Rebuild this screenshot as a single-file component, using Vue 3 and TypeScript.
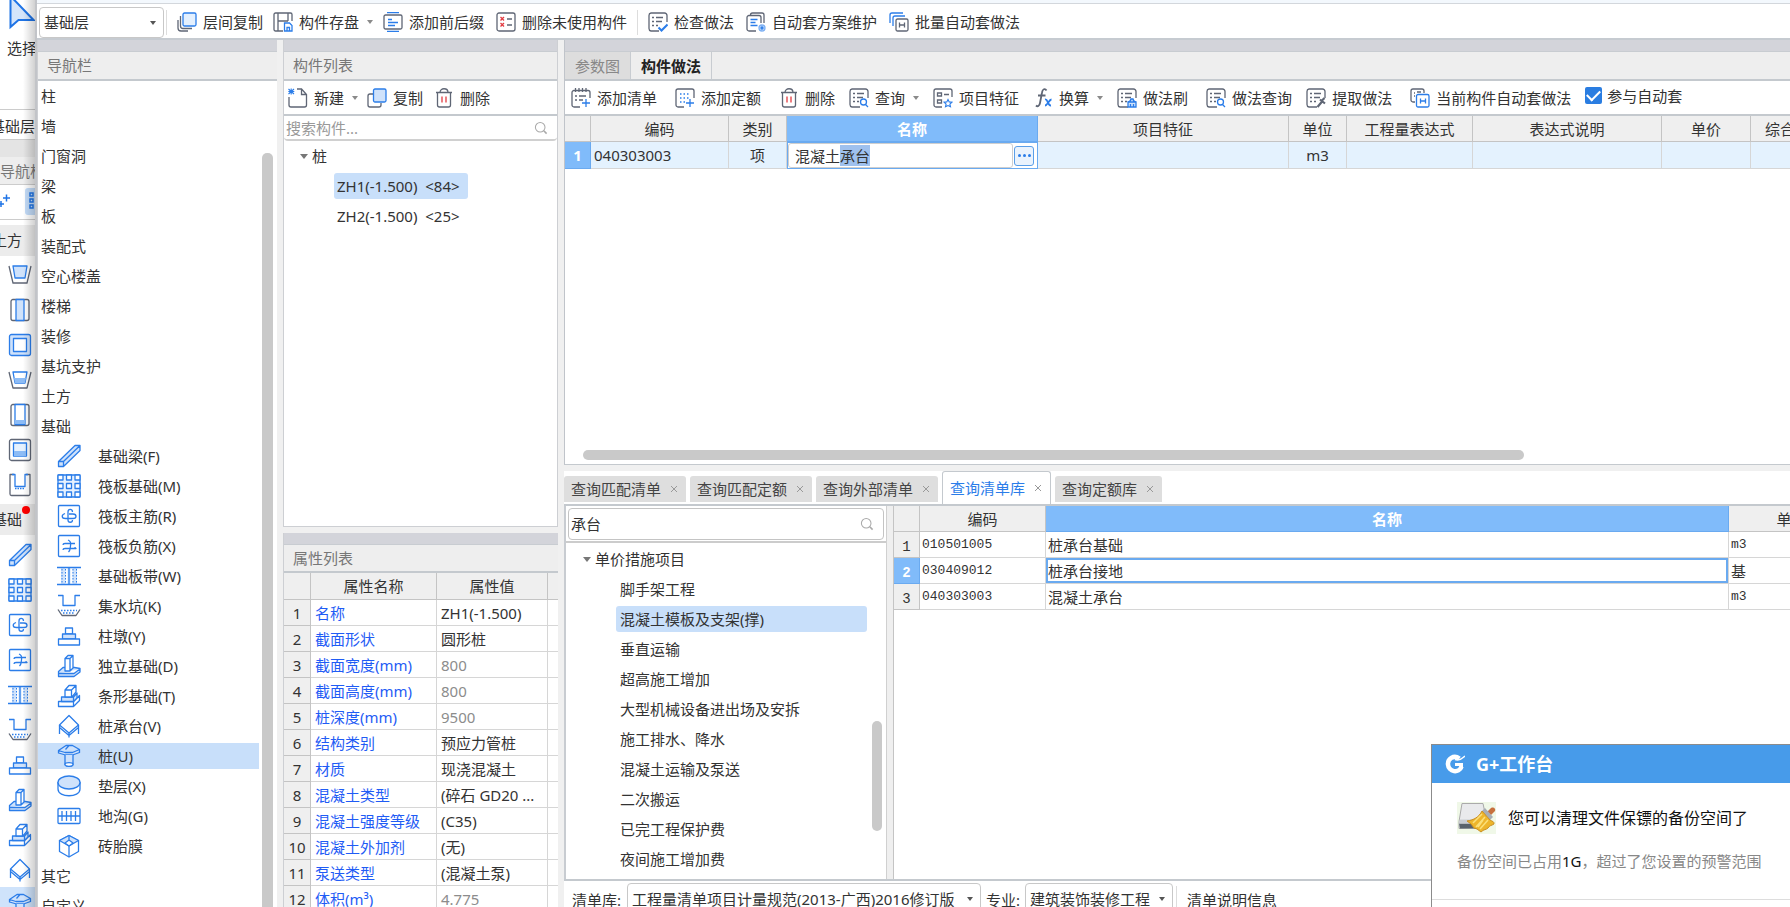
<script setup lang="ts">
import { h, onMounted, ref } from 'vue'
import type { FunctionalComponent } from 'vue'

const G = '#5f6675'
const B = '#2b7de9'
const L = '#cfe2fb'

/* Shape markup of every glyph: toolbar glyphs on a 20 grid, component glyphs on a 24 grid. */
const sheet = `<path d="M11 19H3a2.500 2.500 0 0 1-2-2.500v-13A2.500 2.500 0 0 1 3 1h13.500A2.500 2.500 0 0 1 19 3.500V10" stroke="${G}"/><path d="M4 5.500h2M8 5.500h7M4 9.500h2M8 9.500h6M4 13.500h2M8 13.500h2" stroke="${G}"/>`
const cells = (y: number) => `<path d="M1 ${y}h5v5H1zM9.500 ${y}h5v5h-5zM18 ${y}h5v5h-5z" fill="#fff" stroke="${B}"/>`

const tools: Record<string, string> = {
  layers: `<rect x="6" y="1" width="13" height="13" rx="1.500" fill="#e4f0fe" stroke="${B}"/><path d="M3.500 4v10a2.500 2.500 0 0 0 2.500 2.500h9M1 8v8a3 3 0 0 0 3 3h7" stroke="${G}"/>`,
  save: `<path d="M10 19H2.500A1.500 1.500 0 0 1 1 17.500v-15A1.500 1.500 0 0 1 2.500 1h15A1.500 1.500 0 0 1 19 2.500V9M5 1v18M5 9h10M15 1v8" stroke="${G}"/><path d="M11.500 11h5l2.500 2.500V19h-7.500zM14 19v-3.500h2.500V19" fill="#fff" stroke="${B}"/>`,
  prefix: `<rect x="1" y="3" width="18" height="14" rx="1.500" stroke="${G}"/><path d="M4 .7h12M4 19.300h12M5 7.500h4M5 10.500h10M5 13.500h7" stroke="${B}"/>`,
  unused: `<rect x="1" y="1" width="18" height="18" rx="2" stroke="${G}"/><path d="M4.500 5l3.500 3.500M8 5l-3.500 3.500M4.500 11l3.500 3.500M8 11l-3.500 3.500" stroke="#e23b41"/><path d="M11 7h5M11 13h5" stroke="${G}"/>`,
  check: `${sheet}<path d="M10.500 15.500l3 3 6-6" stroke="${B}" stroke-width="2"/>`,
  scheme: `<path d="M10 19H3a2 2 0 0 1-2-2V5.500A2 2 0 0 1 3 3.500h10a2 2 0 0 1 2 2V11M4.500 3.500V3a2 2 0 0 1 2-2H16a2 2 0 0 1 2 2v8" stroke="${G}"/><path d="M4.500 7.500h7M4.500 10.500h5M4.500 13.500h7" stroke="${B}"/><circle cx="16" cy="16" r="3" fill="${L}" stroke="#7db0f3"/><circle cx="16" cy="16" r="1" stroke="${B}"/>`,
  batch: `<path d="M1 11V3a2 2 0 0 1 2-2h11M4 14V6a2 2 0 0 1 2-2h10" stroke="${B}"/><rect x="7" y="7" width="12" height="12" rx="1.500" fill="#fff" stroke="${G}"/><path d="M10.500 10.500v5M15.500 10.500v5M10.500 13h5" stroke="${G}"/>`,
  create: `<path d="M1 9v8a2 2 0 0 0 2 2h13.500a2 2 0 0 0 2-2V6.500L13.500 1H9M13.500 1v5.500h5" stroke="${G}"/><path d="M.5 1l5.500 5M6 1L.5 6M3.200 .5v6M.3 3.500h6" stroke="${B}" stroke-width="1.100"/>`,
  copy: `<path d="M6 6H3a2 2 0 0 0-2 2v9a2 2 0 0 0 2 2h9a2 2 0 0 0 2-2v-2" stroke="${G}"/><rect x="6.500" y="1" width="12.500" height="13" rx="1.500" fill="${L}" stroke="${B}"/>`,
  trash: `<path d="M2 4.500h16M3.500 4.500V17a2 2 0 0 0 2 2h9a2 2 0 0 0 2-2V4.500M6 4.500c0-5 8-5 8 0" stroke="${G}"/><path d="M8 8.500v6M12 8.500v6" stroke="#e23b41"/>`,
  addList: `<path d="M9 19H3a2 2 0 0 1-2-2V4.500a2 2 0 0 1 2-2h14a2 2 0 0 1 2 2V10M4.500 0v4M8 0v4M11.500 0v4M15 0v4M4 8h2M8 8h7M4 12h2M8 12h4" stroke="${G}"/><path d="M15 11v8M11 15h8" stroke="${B}"/>`,
  addQuota: `<path d="M9 19H3a2 2 0 0 1-2-2V3a2 2 0 0 1 2-2h14a2 2 0 0 1 2 2v7" stroke="${G}"/><path d="M5 6h10M5 10h10M5 14h5" stroke="${B}" stroke-dasharray="1.500 2"/><path d="M15 11v8M11 15h8" stroke="${B}"/>`,
  query: `${sheet}<circle cx="14.500" cy="14" r="3" fill="#fff" stroke="${B}"/><path d="M16.500 16.500L19 19" stroke="${B}"/>`,
  feature: `<path d="M9 19H3a2 2 0 0 1-2-2V3a2 2 0 0 1 2-2h14a2 2 0 0 1 2 2v6M4.500 5h4v3h-4zM4.500 12h4v3h-4zM11 6.500h5" stroke="${G}"/><path d="M15 11.500l1.200 2.400 2.700.3-2 1.900.6 2.700-2.500-1.300-2.500 1.300.6-2.700-2-1.900 2.700-.3z" fill="#fff" stroke="${B}" stroke-width="1.100"/>`,
  formula: `<path d="M13.500 2.500C12 0 9.500 1 9 4.500L7 15c-.5 3-2.500 4-4 2.500M5 7.500h7.500" stroke="${G}" stroke-width="1.800"/><path d="M12 11.500c3-1 2.500 6.500 6 6M18.500 11.500c-2.500 0-4 6-6.500 6" stroke="${B}" stroke-width="1.800"/>`,
  brush: `${sheet}<path d="M11 19v-5h8v5zM11 14c2 0 2.500-.500 3-3h2c.5 2.500 1 3 3 3M13.500 19v-3M16.500 19v-3" fill="${L}" stroke="${B}"/>`,
  extract: `${sheet}<path d="M11.500 19l5-6M14 11.500l5 4M15.500 13l3-3" stroke="${G}" stroke-width="2.200"/>`,
  current: `<path d="M5 14H3a2 2 0 0 1-2-2V3a2 2 0 0 1 2-2h9a2 2 0 0 1 2 2v2M4 5h1M4 8h1M7 4h4" stroke="${G}"/><rect x="6.500" y="6.500" width="12.500" height="12.500" rx="1.500" fill="#fff" stroke="${B}"/><path d="M10.500 10.500v5M15.500 10.500v5M10.500 13h5" stroke="${B}"/>`,
  find: `<circle cx="9" cy="9" r="6" stroke="#a9a9a9"/><path d="M13.500 13.500L17 17" stroke="#a9a9a9" stroke-width="2"/>`,
}

const parts: Record<string, string> = {
  beam: `<path d="M1.500 17.500L18 1.500h5v5L6.500 22.500h-5zM1.500 17.500h5v5M6.500 17.500L23 1.500" fill="${L}" stroke="${B}"/>`,
  raft: `<rect x="1" y="1" width="22" height="22" rx="1" fill="#e6f1fe" stroke="${B}"/>${cells(1)}${cells(9.5)}${cells(18)}`,
  mainBar: `<rect x="1.500" y="1.500" width="21" height="21" rx="1" stroke="${B}"/><path d="M8 9.500c-4 1.500-3.500 5 .5 5H16c4 0 4-4.500 0-4.500h-4" stroke="${B}"/><path d="M15.500 8c0-3.500-4.500-3.500-4.500 0v8c0 3 4.500 3 4.500 0" stroke="${B}"/>`,
  negBar: `<rect x="1.500" y="1.500" width="21" height="21" rx="1" stroke="${B}"/><path d="M6 11c0-1.500 1-1.500 2-1.500h10M6 16c0-1.500 1-1.500 2-1.500h11c-1 0-1-1-1-1.500" stroke="${B}"/><path d="M11 6c3 1 3 3 2.500 6s0 4-2 6" stroke="${B}"/>`,
  strip: `<path d="M4 3.500h16v17H4z" fill="${L}"/><path d="M8.500 3.500h2v17h-2zM13.500 3.500h2v17h-2z" fill="#fff"/><path d="M0 3.500h24M0 20.500h24M12 3.500v17" stroke="${B}"/><path d="M5 5v15M8.500 5v15M16 5v15M19.500 5v15" stroke="${B}" stroke-width="1" stroke-dasharray="1.500 1.500"/>`,
  sump: `<path d="M1 1.500h5v10h12v-10h5" stroke="${B}"/><path d="M4 16.500h16M6 19h12" stroke="${B}" stroke-dasharray="1.500 1.500"/><path d="M1 15.500l4 6h14l4-6" stroke="${G}"/>`,
  pier: `<path d="M8.500 4h7v6h-7z" stroke="${B}"/><path d="M5.500 10h13v5h-13z" fill="${L}" stroke="${B}"/><path d="M1.500 15h21v6h-21z" fill="#fff" stroke="${B}"/>`,
  isolated: `<path d="M1.500 17.500L6 13.500h11.500l5.500 1v3.500l-6 4.500H1.500zM1.500 19.500H17l6-4.500" fill="${L}" stroke="${B}"/><path d="M8 17V4.500l3-3h5V14l-3 3zM8 4.500h5V17M13 4.500l3-3" fill="#fff" stroke="${B}"/>`,
  stripBase: `<path d="M1.500 17.500h15v5h-15zM16.500 17.500l6-6v5l-6 6" fill="#fff" stroke="${B}"/><path d="M4.500 13h12v4.500h-12zM16.500 13l3.500-4v5l-3.500 3.500" fill="${L}" stroke="${B}"/><path d="M8 13V6l4-4.500h7V8l-4 5zM8 6h6.500L19 1.500M14.500 6v7" fill="#fff" stroke="${B}"/>`,
  cap: `<path d="M12 1.500l9.500 9.500-9.500 8L2.500 11z" fill="#fff" stroke="${B}"/><path d="M2.500 11v9M21.500 11v9M12 19v4.500M2.500 13.500l9.500 8 9.500-8" stroke="${B}"/>`,
  pile: `<path d="M1.500 6.500L9 1.500h6.500L22.500 5.500v3L15.500 11H8.500l-7-2zM1.500 6.500L8 8.500h7.500l7-3M8.500 5.500L12 1.500" fill="${L}" stroke="${B}"/><path d="M8 11v9.500c1 2.500 7 2.500 8 0V11" fill="${L}" stroke="${B}"/><ellipse cx="12" cy="20.500" rx="4" ry="1.800" fill="#fff" stroke="${B}"/>`,
  cushion: `<path d="M1 8v7c0 9 22 9 22 0V8" stroke="${B}"/><ellipse cx="12" cy="8.500" rx="11" ry="6.500" fill="${L}" stroke="${B}"/>`,
  trench: `<rect x="1" y="4.500" width="22" height="15" rx="1" stroke="${B}"/><path d="M1 12h22M5 7v10M9.500 7v10M14 7v10M18.500 7v10" stroke="${B}"/>`,
  brick: `<path d="M12 1.500l9.500 5v11L12 23l-9.500-5.500v-11z" fill="#fff" stroke="${B}"/><path d="M12 1.500l9.500 5L12 12 2.500 6.500z" fill="${L}" stroke="${B}"/><path d="M12 12v11M12 1.500V6M8 9l4-3 4 3-4 3z" fill="#fff" stroke="${B}"/>`,
  pitA: `<path d="M1 3l4 17h14l4-17" stroke="${G}"/><path d="M5 3h14l-2 12H7z" fill="${L}" stroke="${B}"/>`,
  slot: `<rect x="3" y="1.500" width="18" height="21" rx="2" stroke="${G}"/><path d="M8 1.500h8v21H8z" fill="${L}" stroke="${B}"/>`,
  square: `<rect x="1.500" y="1.500" width="21" height="21" rx="2" fill="${L}" stroke="${B}"/><rect x="5.500" y="5.500" width="13" height="13" fill="#fff" stroke="${B}"/>`,
  pitB: `<path d="M1 4l4 16h14l4-16" stroke="${G}"/><path d="M5 4h14l-2 11H7z" stroke="${B}"/><path d="M6 10h12l-1 5H7z" fill="#8dbcf6"/>`,
  slotFill: `<rect x="3" y="1.500" width="18" height="21" rx="2" stroke="${G}"/><path d="M7 1.500v20h10v-20z" fill="#fff" stroke="${B}"/><path d="M7 17h10v4H7z" fill="#8dbcf6"/>`,
  squareFill: `<rect x="1.500" y="1.500" width="21" height="21" rx="2" stroke="${G}"/><path d="M5.500 5h13v13h-13z" fill="#e6f1fe" stroke="${B}"/><path d="M6 13h12v5H6z" fill="#8dbcf6"/>`,
  trough: `<path d="M6 1.500H2v19.500a1.500 1.500 0 0 0 1.500 1.500h17a1.500 1.500 0 0 0 1.500-1.500V1.500h-4" stroke="${G}"/><path d="M4 1.500h3v12h10v-12h3" stroke="${B}"/><path d="M7 15.500h10" stroke="${B}" stroke-dasharray="1.500 1"/>`,
}

const Tool: FunctionalComponent<{ name: string }> = (p) =>
  h('svg', { class: 'tool-icon', viewBox: '0 0 20 20', fill: 'none', 'stroke-width': 1.3, 'aria-hidden': 'true', innerHTML: tools[p.name] })
Tool.props = ['name']
const Part: FunctionalComponent<{ name: string }> = (p) =>
  h('svg', { class: 'part-icon', viewBox: '0 0 24 24', fill: 'none', 'stroke-width': 1.3, 'stroke-linejoin': 'round', 'aria-hidden': 'true', innerHTML: parts[p.name] })
Part.props = ['name']

interface Action { icon: string; text: string; menu?: boolean; wide?: boolean }
const fileActions: Action[] = [
  { icon: 'layers', text: '层间复制' },
  { icon: 'save', text: '构件存盘', menu: true },
  { icon: 'prefix', text: '添加前后缀', wide: true },
  { icon: 'unused', text: '删除未使用构件' },
]
const methodActions: Action[] = [
  { icon: 'check', text: '检查做法', wide: true },
  { icon: 'scheme', text: '自动套方案维护', wide: true },
  { icon: 'batch', text: '批量自动套做法' },
]
const listActions: Action[] = [
  { icon: 'create', text: '新建', menu: true },
  { icon: 'copy', text: '复制', wide: true },
  { icon: 'trash', text: '删除' },
]
const rowActions: Action[] = [
  { icon: 'addList', text: '添加清单', wide: true },
  { icon: 'addQuota', text: '添加定额', wide: true },
  { icon: 'trash', text: '删除' },
  { icon: 'query', text: '查询', menu: true },
  { icon: 'feature', text: '项目特征' },
  { icon: 'formula', text: '换算', menu: true },
  { icon: 'brush', text: '做法刷', wide: true },
  { icon: 'query', text: '做法查询' },
  { icon: 'extract', text: '提取做法', wide: true },
  { icon: 'current', text: '当前构件自动套做法' },
]

const categories = ['柱', '墙', '门窗洞', '梁', '板', '装配式', '空心楼盖', '楼梯', '装修', '基坑支护', '土方', '基础']
const foundations = [
  { icon: 'beam', text: '基础梁(F)' },
  { icon: 'raft', text: '筏板基础(M)' },
  { icon: 'mainBar', text: '筏板主筋(R)' },
  { icon: 'negBar', text: '筏板负筋(X)' },
  { icon: 'strip', text: '基础板带(W)' },
  { icon: 'sump', text: '集水坑(K)' },
  { icon: 'pier', text: '柱墩(Y)' },
  { icon: 'isolated', text: '独立基础(D)' },
  { icon: 'stripBase', text: '条形基础(T)' },
  { icon: 'cap', text: '桩承台(V)' },
  { icon: 'pile', text: '桩(U)' },
  { icon: 'cushion', text: '垫层(X)' },
  { icon: 'trench', text: '地沟(G)' },
  { icon: 'brick', text: '砖胎膜' },
]
const lastCategories = ['其它', '自定义']
const earthIcons = ['pitA', 'slot', 'square', 'pitB', 'slotFill', 'squareFill', 'trough']
const railIcons = foundations.slice(0, 11).map((f) => f.icon)
const activePart = ref('pile')

const piles = ['ZH1(-1.500)  <84>', 'ZH2(-1.500)  <25>']
const activePile = ref(0)

const properties: { name: string; value: string; muted?: boolean }[] = [
  { name: '名称', value: 'ZH1(-1.500)' },
  { name: '截面形状', value: '圆形桩' },
  { name: '截面宽度(mm)', value: '800', muted: true },
  { name: '截面高度(mm)', value: '800', muted: true },
  { name: '桩深度(mm)', value: '9500', muted: true },
  { name: '结构类别', value: '预应力管桩' },
  { name: '材质', value: '现浇混凝土' },
  { name: '混凝土类型', value: '(碎石 GD20 ...' },
  { name: '混凝土强度等级', value: '(C35)' },
  { name: '混凝土外加剂', value: '(无)' },
  { name: '泵送类型', value: '(混凝土泵)' },
  { name: '体积(m³)', value: '4.775', muted: true },
]

const queryTabs = ['查询匹配清单', '查询匹配定额', '查询外部清单', '查询清单库', '查询定额库']
const activeTab = ref(3)

const measures = ['脚手架工程', '混凝土模板及支架(撑)', '垂直运输', '超高施工增加', '大型机械设备进出场及安拆', '施工排水、降水', '混凝土运输及泵送', '二次搬运', '已完工程保护费', '夜间施工增加费']
const activeMeasure = ref(1)

const results = [
  { code: '010501005', name: '桩承台基础', unit: 'm3' },
  { code: '030409012', name: '桩承台接地', unit: '基' },
  { code: '040303003', name: '混凝土承台', unit: 'm3' },
]
const activeResult = ref(1)

const itemName = ref('混凝土承台')
const search = ref('承台')
const filter = ref('')
const autoApply = ref(true)
const nameInput = ref<HTMLInputElement | null>(null)

onMounted(() => {
  nameInput.value?.focus()
  nameInput.value?.setSelectionRange(3, 5)
})
</script>

<template>
  <div class="desktop">
    <aside class="rail">
      <div class="rail-select">
        <svg viewBox="0 0 36 32" aria-hidden="true"><path d="M10.500 -4v31l8-7h15z" fill="#d5e5fa" stroke="#1f74e6" stroke-width="2" /></svg>
        <span>选择</span>
      </div>
      <div class="rail-floor">基础层</div>
      <div class="rail-strip"></div>
      <div class="rail-title">导航栏</div>
      <div class="rail-view">
        <svg viewBox="0 0 36 34" aria-hidden="true" fill="none" stroke="#1f74e6" stroke-width="1.500">
          <rect x="25" y="3" width="16" height="27" rx="3" fill="#c3dcf9" stroke="none" />
          <path d="M-2 19h6M1 16v6M3 13h7M6.500 9.500v7" />
          <rect x="30" y="8" width="3" height="3" /><rect x="30" y="14" width="3" height="3" /><rect x="30" y="20" width="3" height="3" />
        </svg>
      </div>
      <div class="rail-group"><span>土方</span></div>
      <div v-for="icon in earthIcons" :key="icon" class="rail-item"><Part :name="icon" /></div>
      <div class="rail-group second"><span>基础</span><i class="dot"></i></div>
      <div v-for="icon in railIcons" :key="icon" class="rail-item" :class="{ active: icon === 'pile' }"><Part :name="icon" /></div>
    </aside>

    <main class="window">
      <header class="topbar">
        <span class="pick floor">
          <select aria-label="楼层"><option>基础层</option></select>
        </span>
        <i class="rule"></i>
        <button v-for="a in fileActions" :key="a.text" type="button" class="action" :class="{ wide: a.wide }">
          <Tool :name="a.icon" /><span>{{ a.text }}</span><i v-if="a.menu" class="caret"></i>
        </button>
        <i class="rule"></i>
        <button v-for="a in methodActions" :key="a.text" type="button" class="action" :class="{ wide: a.wide }">
          <Tool :name="a.icon" /><span>{{ a.text }}</span>
        </button>
      </header>

      <div class="docks">
        <section class="dock nav">
          <div class="grip"></div>
          <h2>导航栏</h2>
          <div class="nav-body">
            <ul>
              <li v-for="c in categories" :key="c"><button type="button" class="cat">{{ c }}</button></li>
              <li v-for="f in foundations" :key="f.icon">
                <button type="button" class="sub" :class="{ active: activePart === f.icon }" @click="activePart = f.icon"><Part :name="f.icon" />{{ f.text }}</button>
              </li>
              <li v-for="c in lastCategories" :key="c"><button type="button" class="cat">{{ c }}</button></li>
            </ul>
            <div class="nav-thumb"></div>
          </div>
        </section>

        <div class="column middle">
          <section class="dock components">
            <div class="grip"></div>
            <h2>构件列表</h2>
            <div class="bar list-bar">
              <button v-for="a in listActions" :key="a.text" type="button" class="action" :class="{ wide: a.wide }">
                <Tool :name="a.icon" /><span>{{ a.text }}</span><i v-if="a.menu" class="caret"></i>
              </button>
            </div>
            <label class="filter"><input v-model="filter" type="text" placeholder="搜索构件..." aria-label="搜索构件" /><Tool name="find" /></label>
            <div class="tree">
              <button type="button" class="branch"><i class="fold"></i>桩</button>
              <button v-for="(p, i) in piles" :key="p" type="button" class="leaf" :class="{ active: activePile === i }" @click="activePile = i"><span>{{ p }}</span></button>
            </div>
          </section>
          <section class="dock properties">
            <div class="grip"></div>
            <h2>属性列表</h2>
            <table class="grid props">
              <thead><tr><th class="num"></th><th class="key">属性名称</th><th class="val">属性值</th><th></th></tr></thead>
              <tbody>
                <tr v-for="(p, i) in properties" :key="p.name">
                  <th class="num" scope="row">{{ i + 1 }}</th><td class="key">{{ p.name }}</td><td class="val" :class="{ muted: p.muted }">{{ p.value }}</td><td></td>
                </tr>
              </tbody>
            </table>
          </section>
        </div>

        <div class="column work">
          <section class="dock upper">
            <div class="grip"></div>
            <div class="view-tabs"><button type="button">参数图</button><button type="button" class="active">构件做法</button></div>
            <div class="bar work-bar">
              <button v-for="a in rowActions" :key="a.text" type="button" class="action" :class="{ wide: a.wide }">
                <Tool :name="a.icon" /><span>{{ a.text }}</span><i v-if="a.menu" class="caret"></i>
              </button>
              <label class="auto"><input v-model="autoApply" type="checkbox" /><span>参与自动套</span></label>
            </div>
            <table class="grid items">
              <thead>
                <tr>
                  <th class="w26"></th><th class="w138">编码</th><th class="w58">类别</th><th class="w251 hot">名称</th><th class="w251">项目特征</th>
                  <th class="w58">单位</th><th class="w126">工程量表达式</th><th class="w189">表达式说明</th><th class="w89">单价</th><th class="w89">综合单价</th>
                </tr>
              </thead>
              <tbody>
                <tr>
                  <th class="hot" scope="row">1</th><td>040303003</td><td class="mid">项</td>
                  <td class="editing">
                    <div class="editor"><input ref="nameInput" v-model="itemName" type="text" aria-label="名称" /><button type="button" aria-label="更多"><i></i><i></i><i></i></button></div>
                  </td>
                  <td></td><td class="mid">m3</td><td></td><td></td><td></td><td></td>
                </tr>
              </tbody>
            </table>
            <div class="blank"></div>
            <div class="track"><div class="thumb"></div></div>
          </section>

          <section class="lower">
            <div class="query-tabs">
              <button v-for="(t, i) in queryTabs" :key="t" type="button" :class="{ active: activeTab === i }" @click="activeTab = i">
                {{ t }}<svg viewBox="0 0 8 8" aria-hidden="true"><path d="M1 1l6 6M7 1L1 7" stroke="#999" stroke-width="1" /></svg>
              </button>
            </div>
            <div class="query-body">
              <div class="library">
                <div class="library-search"><label><input v-model="search" type="text" aria-label="搜索清单" /><Tool name="find" /></label></div>
                <div class="library-tree">
                  <div class="nodes">
                    <button type="button" class="branch"><i class="fold"></i>单价措施项目</button>
                    <button v-for="(m, i) in measures" :key="m" type="button" class="measure" :class="{ active: activeMeasure === i }" @click="activeMeasure = i">{{ m }}</button>
                  </div>
                  <div class="library-thumb"></div>
                </div>
              </div>
              <div class="results">
                <table class="grid found">
                  <thead><tr><th class="w26"></th><th class="w126">编码</th><th class="w683 hot">名称</th><th class="w126">单位</th></tr></thead>
                  <tbody>
                    <tr v-for="(r, i) in results" :key="r.code" :class="{ current: activeResult === i }" @click="activeResult = i">
                      <th scope="row">{{ i + 1 }}</th><td class="mono">{{ r.code }}</td><td class="name">{{ r.name }}</td><td :class="{ mono: r.unit === 'm3' }">{{ r.unit }}</td>
                    </tr>
                  </tbody>
                </table>
              </div>
            </div>
            <footer class="query-foot">
              <label for="library">清单库:</label>
              <span class="pick lib"><select id="library"><option>工程量清单项目计量规范(2013-广西)2016修订版</option></select></span>
              <label for="trade">专业:</label>
              <span class="pick trade"><select id="trade"><option>建筑装饰装修工程</option></select></span>
              <i class="rule"></i>
              <button type="button">清单说明信息</button>
            </footer>
          </section>
        </div>
      </div>
    </main>

    <aside class="toast">
      <h3>
        <svg viewBox="0 0 20 20" aria-hidden="true" fill="none" stroke="#fff"><path d="M14.500 4.500C8.500.5 2.500 5 3 10.500c.5 7.500 11 9.500 13.500 2" stroke-width="4.500" /><path d="M10 10.500h6.500v4" stroke-width="3" /><path d="M10 5.500c3 1 7-.5 10-3.500" stroke-width="1.500" /></svg>
        G+工作台
      </h3>
      <div class="toast-body">
        <p class="lead">
          <svg viewBox="0 0 39 32" aria-hidden="true">
            <path d="M0 0h39v32H0z" fill="#f0f8e8" />
            <path d="M5 1.500h21l4 19v5l-28 1v-7z" fill="#e9eaec" stroke="#aaa" />
            <path d="M2 21.500h20v5H3z" fill="#59636c" /><path d="M3 17.500h20l1 4H2z" fill="#c9cdd2" />
            <path d="M30 10l4-4c3-1.500 5 1 4 3l-4 4z" fill="#c7703e" />
            <path d="M25 9l3-3 8 9-3 3z" fill="#a7adb5" />
            <path d="M25 9l8 9c3 2 4 1 4 4-3 2-4 1-6 4-2 2-4 1-7 4l-4-3-3-1-3-4-4-3c7-1 12-4 15-10z" fill="#edb52c" stroke="#c98f24" />
            <path d="M25 12l-9 9M28 15l-9 10M31 18l-8 9M26 18l-5 7" stroke="#fbe07a" stroke-width="1.500" />
          </svg>
          您可以清理文件保镖的备份空间了
        </p>
        <p class="detail">备份空间已占用<b>1G</b>，超过了您设置的预警范围</p>
      </div>
      <div class="toast-foot"></div>
    </aside>
  </div>
</template>

<style>
html, body { margin: 0; height: 100%; overflow: hidden; }
</style>

<style scoped>
.desktop, .desktop :deep(*) { box-sizing: border-box; }
.desktop {
  display: flex; height: 100vh; overflow: hidden; position: relative; background: #fff;
  font-family: "Noto Sans", "Noto Sans CJK SC", sans-serif; font-size: 15px; line-height: 20px; color: #333;
}
button, input, select { font: inherit; color: inherit; margin: 0; padding: 0; border: 0; background: none; }
button { white-space: nowrap; text-align: left; }
input { outline: none; min-width: 0; width: 0; }
ul { list-style: none; margin: 0; padding: 0; }
h2, h3, p { margin: 0; font-weight: 400; }
.tool-icon { width: 20px; height: 20px; flex: none; display: block; }
.part-icon { width: 24px; height: 24px; flex: none; display: block; }

/* rail */
.rail { position: relative; flex: 0 0 37px; overflow: hidden; white-space: nowrap; background: #fff; border-right: 2px solid #c2c4c8; }
.rail::after { content: ""; position: absolute; inset: 0 0 0 auto; width: 12px; background: linear-gradient(90deg, rgba(0, 0, 0, 0), rgba(0, 0, 0, 0.18)); }
.rail-select { height: 110px; border-bottom: 1px solid #ccc; }
.rail-select svg { display: block; width: 36px; height: 32px; }
.rail-select span { display: block; padding: 6px 0 0 7px; }
.rail-floor { height: 30px; line-height: 32px; border-bottom: 1px solid #ccc; direction: rtl; }
.rail-strip { height: 17px; background: #e4e4e4; }
.rail-title { height: 28px; line-height: 28px; color: #777; background: #eee; border-bottom: 1px solid #ccc; }
.rail-view { height: 35px; border-bottom: 1px solid #ccc; }
.rail-view svg { display: block; width: 36px; height: 34px; }
.rail-group { position: relative; height: 31px; margin: 5px 0 1px; line-height: 31px; background: #ececec; }
.rail-group span { display: block; width: 22px; direction: rtl; }
.rail-group.second { margin: 2px 0; }
.dot { position: absolute; left: 22px; top: 2px; width: 8px; height: 8px; border-radius: 50%; background: #f00; }
.rail-item { height: 35px; padding: 6px 0 0 8px; }
.rail-item.active { background: #cfe3fb; }

/* window */
.window { flex: 1; min-width: 0; display: flex; flex-direction: column; background: #f0f0f0; border-top: 3px solid #f3f8fd; }
.topbar { flex: none; height: 37px; display: flex; align-items: center; gap: 10px; padding: 2px 0 0 2px; background: #fff; border-top: 1px solid #d3d7dc; border-bottom: 2px solid #c6cbd1; }
.rule { flex: none; width: 1px; height: 25px; background: #ddd; }
.pick { position: relative; display: flex; flex: none; height: 31px; border: 1px solid #c8c8c8; border-radius: 4px; background: #fff; }
.pick::after { content: ""; position: absolute; right: 7px; top: 13px; border: 3px solid transparent; border-top: 4px solid #555; border-bottom: 0; pointer-events: none; }
.pick select { appearance: none; flex: 1; min-width: 0; padding-left: 4px; outline: none; }
.floor { width: 125px; margin-right: -8px; }
.action { display: flex; align-items: center; gap: 6px; flex: none; height: 28px; }
.action.wide { margin-right: 2px; }
.caret { margin-left: 2px; border: 3px solid transparent; border-top: 4px solid #8a8a8a; border-bottom: 0; }
.docks { flex: 1; min-height: 0; display: flex; gap: 6px; }
.dock { display: flex; flex-direction: column; min-height: 0; overflow: hidden; background: #fff; border-left: 1px solid #cdcfd3; }
.grip { flex: none; height: 12px; background: #d3d4da; border-bottom: 1px solid #c8ccd1; }
h2 { flex: none; height: 29px; line-height: 27px; padding-left: 9px; font-size: 15px; color: #777; background: #eee; border-bottom: 2px solid #c4c9ce; }
.nav { flex: 0 0 240px; }
.nav-body { flex: 1; min-height: 0; display: flex; overflow: hidden; }
.nav ul { flex: 1; }
.nav li { height: 30px; padding: 2px 0; }
.cat { display: block; width: 100%; height: 26px; padding-left: 3px; }
.sub { display: flex; align-items: center; gap: 17px; width: 100%; height: 26px; padding-left: 19px; }
.active.sub { background: #c8dffa; }
.nav-thumb { flex: 0 0 11px; margin: 72px 4px 0 3px; border-radius: 5px 5px 0 0; background: #c9c9c9; }

.column { display: flex; flex-direction: column; gap: 6px; min-width: 0; min-height: 0; }
.middle { flex: 0 0 275px; }
.components { flex: 1; border-right: 1px solid #cdcfd3; border-bottom: 1px solid #cdcfd3; }
.bar { flex: none; height: 35px; display: flex; align-items: center; border-bottom: 2px solid #c4c9ce; }
.list-bar { gap: 9px; padding-left: 4px; }
.filter { flex: none; height: 25px; display: flex; align-items: center; padding: 0 8px 0 2px; border-bottom: 2px solid #d0d0d0; border-radius: 4px; }
.filter input { flex: 1; }
.filter .tool-icon { width: 16px; height: 16px; }
.filter input::placeholder { color: #999; opacity: 1; }
.tree { flex: 1; }
.branch { display: flex; align-items: center; gap: 4px; height: 30px; padding-left: 16px; }
.fold { border: 4px solid transparent; border-top: 5px solid #777; border-bottom: 0; }
.leaf { display: block; height: 30px; padding: 2px 0 2px 50px; white-space: pre; }
.leaf span { display: block; height: 26px; line-height: 26px; padding: 0 8px 0 3px; border-radius: 3px; }
.leaf.active span { background: #c8dffa; }
.properties { flex: 0 0 374px; }
.properties h2 { height: 28px; }

/* tables */
.grid { flex: none; border-collapse: separate; border-spacing: 0; white-space: nowrap; }
.grid th, .grid td { height: 26px; padding: 0; overflow: hidden; border-right: 1px solid #d6d6d6; border-bottom: 1px solid #d6d6d6; font-weight: 400; }
.grid th { background: #efefef; border-color: #c4c4c4; text-align: center; }
.grid .hot { background: #80bbfa; color: #fff; border-color: #6aaaf0; font-weight: 700; }
.props { table-layout: fixed; width: 100%; }
.props thead th { height: 27px; }
.props .num { width: 27px; }
.props .key { width: 126px; }
.props .val { width: 111px; }
.props td { padding-left: 4px; }
.props td:last-child, .props thead th:last-child { border-right: 0; }
.props td.key { color: #1f5cf5; }
.props .muted { color: #8c8c8c; }
.items, .found { width: max-content; table-layout: fixed; }
.w26 { min-width: 26px; width: 26px; }
.w58 { min-width: 58px; width: 58px; }
.w89 { min-width: 89px; width: 89px; }
.w126 { min-width: 126px; width: 126px; }
.w138 { min-width: 138px; width: 138px; }
.w189 { min-width: 189px; width: 189px; }
.w251 { min-width: 251px; width: 251px; }
.w683 { min-width: 683px; width: 683px; }
.items tbody th, .items tbody td { height: 27px; }
.items tbody td { padding-left: 3px; background: #e4f2fe; }
.items tbody td.mid { padding: 0; text-align: center; }
.items tbody td.editing { padding: 0; background: #fff; border: 1px solid #6aaaf0; }
.editor { display: flex; align-items: center; height: 25px; padding-right: 3px; gap: 1px; }
.editor input { flex: 1; height: 25px; padding-left: 6px; border: 1px solid #cfcfcf; border-radius: 3px; }
.editor input::selection { background: #9fc1ee; color: #333; }
.editor button { display: flex; align-items: center; justify-content: center; gap: 2px; width: 20px; height: 20px; border: 1px solid #5b9fe8; border-radius: 3px; background: #eaf3fd; }
.editor i { width: 3px; height: 3px; border-radius: 50%; background: #2b7de9; }

/* work area */
.work { flex: 1; }
.upper { flex: 1; border-bottom: 1px solid #c4c9ce; border-left: 1px solid #c0c4ca; }
.view-tabs { flex: none; display: flex; height: 29px; background: #eee; border-bottom: 2px solid #c4c9ce; }
.view-tabs button { padding: 0 10px; border-right: 1px solid #c8ccd1; color: #888; background: #ddd; }
.view-tabs .active { color: #222; background: #eee; font-weight: 700; }
.work-bar { gap: 14px; padding-left: 6px; }
.work-bar .wide { margin-right: 4px; }
.auto { display: flex; align-items: center; gap: 5px; flex: none; padding-bottom: 4px; }
.auto input { appearance: none; width: 17px; height: 17px; border-radius: 2px; background: #2a7de1; display: grid; place-items: center; }
.auto input:not(:checked) { background: #fff; border: 1px solid #999; }
.auto input:checked::after { content: ""; width: 11px; height: 6px; margin-bottom: 4px; border: solid #fff; border-width: 0 0 2px 2px; rotate: -45deg; }
.blank { flex: 1; }
.track { flex: none; height: 14px; padding-left: 18px; }
.thumb { width: 78%; height: 10px; border-radius: 5px; background: #c9c9c9; }

.lower { flex: 0 0 436px; display: flex; flex-direction: column; min-height: 0; overflow: hidden; background: #fff; }
.query-tabs { flex: none; display: flex; align-items: center; gap: 4px; height: 35px; border-bottom: 2px solid #c4c9ce; }
.query-tabs button { display: flex; align-items: center; gap: 9px; height: 26px; margin-top: 2px; padding: 0 8px 0 7px; background: #dedede; border-radius: 3px 3px 0 0; color: #444; }
.query-tabs button.active { height: 33px; margin: 0; background: #fff; border: 1px solid #c4c9ce; border-bottom: 0; color: #2b7de9; }
.query-tabs svg { width: 8px; height: 8px; }
.query-body { flex: 1; min-height: 0; display: flex; gap: 6px; background: #efefef; border-bottom: 2px solid #c4c9ce; }
.library { flex: 0 0 323px; display: flex; flex-direction: column; min-height: 0; background: #fff; border-left: 2px solid #c8ccd1; border-right: 1px solid #d0d0d0; }
.library-search { flex: none; height: 37px; padding: 2px; border-bottom: 2px solid #ccc; }
.library-search label { display: flex; align-items: center; height: 32px; padding: 0 8px 0 2px; border: 1px solid #c4c4c4; border-radius: 4px; }
.library-search input { flex: 1; }
.library-search .tool-icon { width: 16px; height: 16px; }
.library-tree { flex: 1; min-height: 0; display: flex; overflow: hidden; }
.nodes { flex: 1; padding-top: 1px; }
.nodes .branch { padding-left: 17px; }
.measure { display: block; width: 251px; height: 26px; margin: 2px 0 4px 50px; padding-left: 4px; border-radius: 3px; }
.measure.active { background: #c8dffa; }
.library-thumb { flex: 0 0 10px; height: 110px; margin: 178px 4px 0 0; border-radius: 5px; background: #c9c9c9; }
.results { flex: 1; min-width: 0; overflow: hidden; background: #fff; border-left: 1px solid #c4c4c4; }
.found td { padding-left: 2px; line-height: 20px; }
.found .mono { font-family: "Liberation Mono", monospace; font-size: 13px; }
.found tbody th { font-family: "Liberation Mono", monospace; font-size: 14px; padding-top: 4px; }
.found .current th { background: #80bbfa; color: #fff; font-weight: 700; border-color: #6aaaf0; }
.found .current .name { box-shadow: inset 0 0 0 2px #6aaaf0; }
.query-foot { flex: none; height: 26px; display: flex; align-items: flex-start; padding: 2px 0 0 8px; overflow: hidden; }
.query-foot > label, .query-foot > button { flex: none; line-height: 34px; }
.query-foot .pick { flex: none; }
.lib { width: 354px; margin: 0 5px 0 6px; }
.trade { width: 148px; margin: 0 3px 0 5px; }
.query-foot .rule { margin: 3px 10px 0 0; }

/* notification */
.toast { position: absolute; right: 0; bottom: 0; width: 359px; background: #fff; border: solid #8b8b8b; border-width: 1px 0 0 1px; }
.toast h3 { display: flex; align-items: center; gap: 11px; height: 38px; padding-left: 13px; background: #479bea; color: #fff; font-size: 18px; font-weight: 700; }
.toast h3 svg { width: 20px; height: 20px; }
.toast-body { padding: 19px 0 0 25px; height: 116px; white-space: nowrap; }
.lead { display: flex; align-items: center; gap: 12px; font-size: 16px; color: #111; }
.lead svg { width: 39px; height: 32px; }
.detail { margin-top: 17px; color: #888; }
.detail b { font-weight: 400; color: #111; }
.toast-foot { height: 8px; border-top: 1px solid #ddd; }
</style>
